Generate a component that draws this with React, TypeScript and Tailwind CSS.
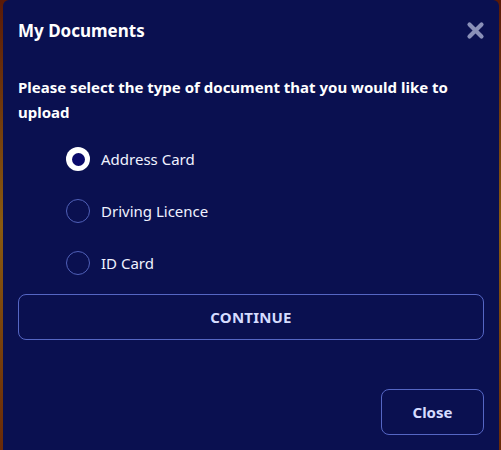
import React, { useState } from "react";

const options = ["Address Card", "Driving Licence", "ID Card"];

export default function App() {
  const [selected, setSelected] = useState(0);
  return (
    <div className="w-[501px] h-[450px] flex bg-gradient-to-b from-[#5a1a08] via-[#8a5a10] to-[#6a2a08] overflow-hidden">
      <div
        className="ml-[3px] mr-[2px] flex-1 bg-[#0a1050] rounded-t-[6px] flex flex-col px-[15px] text-white"
        style={{ fontFamily: '"Noto Sans", "Open Sans", sans-serif' }}
      >
        <div className="flex items-center justify-between h-[60px] pt-[1px]">
          <h1 className="text-[17px] font-bold leading-none">My Documents</h1>
          <button className="w-[20px] h-[20px] flex items-center justify-center -mr-[1px]" aria-label="close">
            <svg width="19" height="19" viewBox="0 0 19 19">
              <path d="M3.5 3.5 L15.5 15.5 M15.5 3.5 L3.5 15.5" stroke="#8a90b8" strokeWidth="4.2" strokeLinecap="round" />
            </svg>
          </button>
        </div>
        <p className="mt-[15px] text-[15px] font-bold leading-[25px] pr-[30px]">
          Please select the type of document that you would like to upload
        </p>
        <div className="flex flex-col gap-[28px] mt-[22px] pl-[48px]">
          {options.map((o, i) => (
            <label key={o} className="flex items-center gap-[11px] cursor-pointer" onClick={() => setSelected(i)}>
              {selected === i ? (
                <span className="w-[24px] h-[24px] rounded-full bg-white flex items-center justify-center">
                  <span className="w-[13px] h-[13px] rounded-full bg-[#0a0a6a]" />
                </span>
              ) : (
                <span className="w-[24px] h-[24px] rounded-full border border-[#5060b8]" />
              )}
              <span className="text-[15px] leading-none text-[#f0f2ff]">{o}</span>
            </label>
          ))}
        </div>
        <button className="mt-[19px] h-[46px] rounded-[8px] border border-[#5566c4] text-[15px] font-bold text-[#d6dcff] tracking-[0.2px]">
          CONTINUE
        </button>
        <div className="flex justify-end mt-[49px]">
          <button className="w-[103px] h-[46px] rounded-[8px] border border-[#5566c4] text-[15px] font-bold text-[#d6dcff]">
            Close
          </button>
        </div>
      </div>
    </div>
  );
}
